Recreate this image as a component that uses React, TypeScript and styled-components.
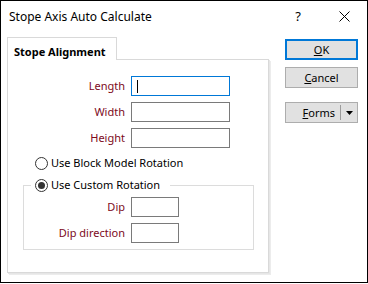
import React from "react";
import styled, { createGlobalStyle } from "styled-components";

const Global = createGlobalStyle`
  html, body { margin: 0; padding: 0; background: #ffffff; }
  body { font-family: "Noto Sans", "Segoe UI", sans-serif; }
  * { box-sizing: border-box; }
`;

const Window = styled.div`
  width: 368px;
  height: 283px;
  border: 1px solid #000;
  background: #fff;
  display: flex;
  flex-direction: column;
  font-family: "Noto Sans", sans-serif;
  font-size: 11px;
  color: #000;
`;

const TitleBar = styled.div`
  height: 30px;
  display: flex;
  align-items: center;
  padding-left: 8px;
`;

const Title = styled.div`
  flex: 1;
  font-size: 12px;
`;

const TitleButton = styled.div<{ $w: number }>`
  width: ${(p) => p.$w}px;
  height: 30px;
  display: flex;
  align-items: center;
  justify-content: center;
  font-size: 13px;
`;

const Body = styled.div`
  flex: 1;
  display: flex;
  padding: 6px 0 0 6px;
`;

const TabArea = styled.div`
  width: 262px;
  display: flex;
  flex-direction: column;
`;

const Tab = styled.div`
  width: 110px;
  height: 23px;
  border: 1px solid #d9d9d9;
  border-bottom: none;
  background: #fff;
  font-weight: 700;
  font-size: 11px;
  padding: 6px 0 0 6px;
  margin-bottom: -1px;
  position: relative;
  z-index: 1;
`;

const Panel = styled.div`
  width: 262px;
  height: 214px;
  border: 1px solid #d9d9d9;
  box-shadow: 1px 1px 0 #e6e6e6, 2px 2px 0 #ececec;
  padding: 16px 0 0 0;
  display: flex;
  flex-direction: column;
`;

const FieldGrid = styled.div<{ $label: number }>`
  display: grid;
  grid-template-columns: ${(p) => p.$label}px auto;
  column-gap: 6px;
  row-gap: 6px;
  align-items: center;
`;

const Label = styled.label`
  text-align: right;
  color: #7d0a1c;
  font-size: 11px;
  line-height: 14px;
`;

const Input = styled.div<{ $w: number; $focus?: boolean }>`
  width: ${(p) => p.$w}px;
  height: 20px;
  border: 1px solid ${(p) => (p.$focus ? "#0078d7" : "#7a7a7a")};
  background: #fff;
  position: relative;
`;

const Caret = styled.span`
  position: absolute;
  left: 5px;
  top: 3px;
  width: 1px;
  height: 13px;
  background: #000;
`;

const RadioRow = styled.div`
  display: flex;
  align-items: center;
  gap: 3px;
  font-size: 11px;
  line-height: 14px;
  background: #fff;
`;

const RadioCircle = styled.span<{ $on?: boolean }>`
  width: 13px;
  height: 13px;
  border-radius: 50%;
  border: 1px solid #333;
  background: #fff;
  display: flex;
  align-items: center;
  justify-content: center;
  &::after {
    content: "";
    display: ${(p) => (p.$on ? "block" : "none")};
    width: 7px;
    height: 7px;
    border-radius: 50%;
    background: #333;
  }
`;

const FirstRadio = styled.div`
  margin: 8px 0 0 27px;
`;

const Group = styled.fieldset`
  margin: 8px 0 0 15px;
  width: 231px;
  height: 72px;
  border: 1px solid #dcdcdc;
  padding: 0;
  position: relative;
`;

const Legend = styled.legend`
  margin-left: 7px;
  padding: 0 10px 0 4px;
`;

const GroupFields = styled.div`
  padding-top: 5px;
`;

const Buttons = styled.div`
  display: flex;
  flex-direction: column;
  margin-left: 16px;
  padding-top: 2px;
`;

const Button = styled.div<{ $default?: boolean; $gap: number }>`
  width: 73px;
  height: 21px;
  margin-top: ${(p) => p.$gap}px;
  background: #e1e1e1;
  border: ${(p) => (p.$default ? "2px solid #0078d7" : "1px solid #adadad")};
  display: flex;
  align-items: center;
  justify-content: center;
  font-size: 11px;
  u { text-decoration: underline; }
`;

const SplitText = styled.div`
  flex: 1;
  text-align: right;
  padding-right: 5px;
`;

const SplitSep = styled.span`
  width: 1px;
  height: 15px;
  background: #9c9c9c;
`;

const SplitArrow = styled.span`
  width: 16px;
  display: flex;
  justify-content: center;
  align-items: center;
`;

export default function App() {
  return (
    <>
      <Global />
      <Window>
        <TitleBar>
          <Title>Stope Axis Auto Calculate</Title>
          <TitleButton $w={46}>?</TitleButton>
          <TitleButton $w={46}>
            <svg width="11" height="11" viewBox="0 0 11 11">
              <path d="M0.5 0.5 L10.5 10.5 M10.5 0.5 L0.5 10.5" stroke="#000" strokeWidth="1" />
            </svg>
          </TitleButton>
        </TitleBar>
        <Body>
          <TabArea>
            <Tab>Stope Alignment</Tab>
            <Panel>
              <FieldGrid $label={117}>
                <Label>Length</Label>
                <Input $w={99} $focus>
                  <Caret />
                </Input>
                <Label>Width</Label>
                <Input $w={99} />
                <Label>Height</Label>
                <Input $w={99} />
              </FieldGrid>
              <FirstRadio>
                <RadioRow>
                  <RadioCircle />
                  Use Block Model Rotation
                </RadioRow>
              </FirstRadio>
              <Group>
                <Legend>
                  <RadioRow>
                    <RadioCircle $on />
                    Use Custom Rotation
                  </RadioRow>
                </Legend>
                <GroupFields>
                  <FieldGrid $label={101}>
                    <Label>Dip</Label>
                    <Input $w={48} />
                    <Label>Dip direction</Label>
                    <Input $w={48} />
                  </FieldGrid>
                </GroupFields>
              </Group>
            </Panel>
          </TabArea>
          <Buttons>
            <Button $default $gap={0}>
              <u>O</u>K
            </Button>
            <Button $gap={7}>
              <u>C</u>ancel
            </Button>
            <Button $gap={14}>
              <SplitText>
                <u>F</u>orms
              </SplitText>
              <SplitSep />
              <SplitArrow>
                <svg width="7" height="4" viewBox="0 0 7 4">
                  <path d="M0 0 H7 L3.5 4 Z" fill="#000" />
                </svg>
              </SplitArrow>
            </Button>
          </Buttons>
        </Body>
      </Window>
    </>
  );
}
